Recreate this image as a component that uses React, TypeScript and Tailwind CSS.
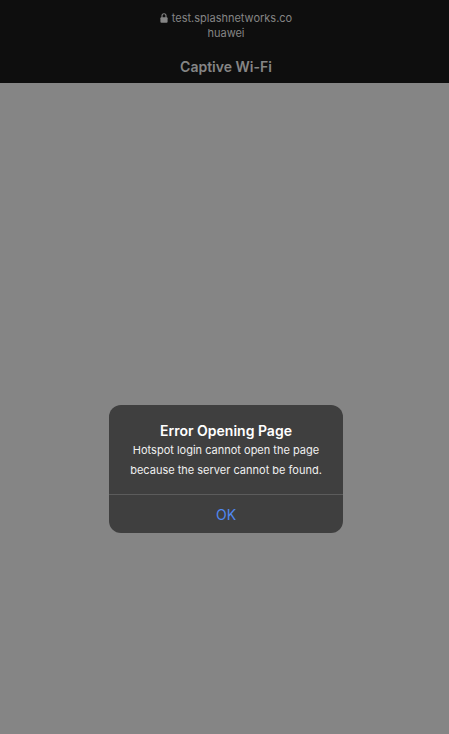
import React, { useState } from "react";

function LockIcon() {
    return (
        <svg width="8" height="12" viewBox="0 0 8 12" aria-hidden="true">
            <path d="M2 5V2.8a2 2 0 0 1 4 0V5" fill="none" stroke="currentColor" strokeWidth="1.1" />
            <rect x="0.4" y="4.3" width="7.2" height="5.4" rx="1" fill="currentColor" />
        </svg>
    );
}

export default function App() {
    const [open, setOpen] = useState(true);

    return (
        <div className="flex min-h-screen flex-col bg-[#858585] font-['Inter',sans-serif]">
            <header className="flex flex-col items-center bg-[#0e0e0e] pb-1.5 pl-[3px] pt-[11px] text-center text-[#858585]">
                <div className="flex items-center gap-1 text-[11px] leading-[15px]">
                    <LockIcon />
                    <span>test.splashnetworks.co</span>
                </div>
                <p className="text-[11px] leading-[15px]">huawei</p>
                <h1 className="mt-4 text-sm font-semibold leading-5">Captive Wi-Fi</h1>
            </header>

            <main className="flex grow flex-col items-center justify-end pb-[201px] pl-[3px]">
                {open && (
                    <div
                        role="alertdialog"
                        aria-labelledby="alert-title"
                        aria-describedby="alert-text"
                        className="w-[234px] overflow-hidden rounded-xl bg-[#3f3f3f] text-center text-white"
                    >
                        <div className="px-4 pb-[14px] pt-4">
                            <h2 id="alert-title" className="text-sm font-semibold leading-[19px]">
                                Error Opening Page
                            </h2>
                            <p id="alert-text" className="text-[11px] leading-5 text-[#f0f0f0]">
                                Hotspot login cannot open the page because the server cannot be found.
                            </p>
                        </div>
                        <button
                            type="button"
                            className="w-full border-t border-[#5c5c5c] pb-[7px] pt-[9px] text-sm leading-[22px] text-[#5088f0]"
                            onClick={() => setOpen(false)}
                        >
                            OK
                        </button>
                    </div>
                )}
            </main>
        </div>
    );
}
